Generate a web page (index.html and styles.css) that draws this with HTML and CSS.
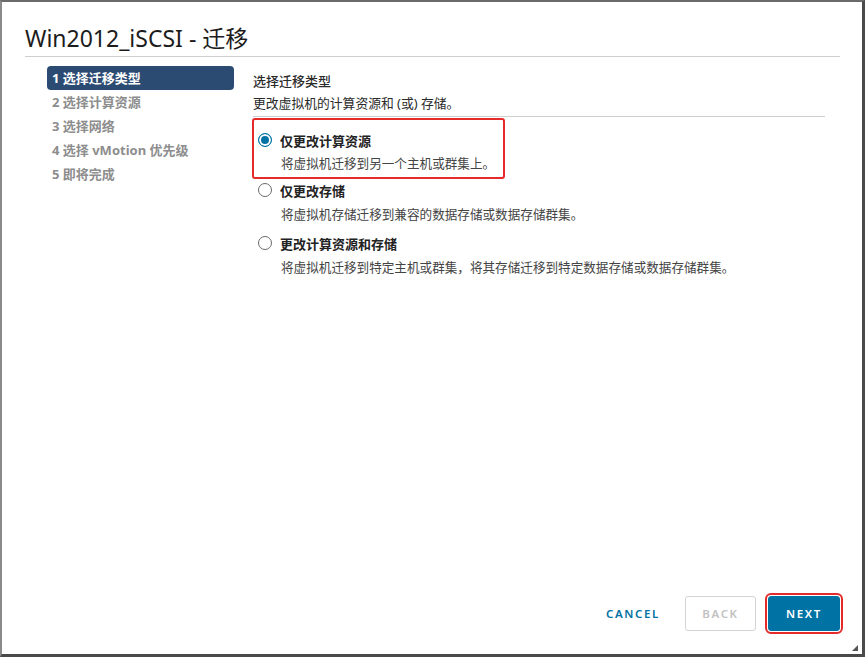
FILE: index.html
```html
<!DOCTYPE html>
<html lang="zh-CN">
<head>
<meta charset="utf-8">
<title>Win2012_iSCSI - 迁移</title>
<link rel="stylesheet" href="styles.css">
</head>
<body>
<div class="frame">
  <h1 class="title">Win2012_iSCSI - 迁移</h1>
  <div class="main">
    <nav class="steps">
      <div class="step active">1 选择迁移类型</div>
      <div class="step">2 选择计算资源</div>
      <div class="step">3 选择网络</div>
      <div class="step">4 选择 vMotion 优先级</div>
      <div class="step">5 即将完成</div>
    </nav>
    <section class="content">
      <div class="head">
        <div class="heading">选择迁移类型</div>
        <div class="sub">更改虚拟机的计算资源和 (或) 存储。</div>
      </div>
      <div class="option highlight">
        <div class="opt-label"><span class="radio checked"></span>仅更改计算资源</div>
        <div class="opt-desc">将虚拟机迁移到另一个主机或群集上。</div>
      </div>
      <div class="option second">
        <div class="opt-label"><span class="radio"></span>仅更改存储</div>
        <div class="opt-desc">将虚拟机存储迁移到兼容的数据存储或数据存储群集。</div>
      </div>
      <div class="option third">
        <div class="opt-label"><span class="radio"></span>更改计算资源和存储</div>
        <div class="opt-desc">将虚拟机迁移到特定主机或群集，将其存储迁移到特定数据存储或数据存储群集。</div>
      </div>
    </section>
  </div>
  <footer class="footer">
    <button class="btn flat">CANCEL</button>
    <button class="btn outline">BACK</button>
    <button class="btn primary">NEXT</button>
  </footer>
  <span class="grip"></span>
</div>
</body>
</html>
```

FILE: styles.css
```css
* { box-sizing: border-box; }
html, body {
  margin: 0;
  padding: 0;
  background: #fff;
}
body {
  font-family: "Noto Sans", "Noto Sans CJK SC", sans-serif;
  color: #333;
}
.frame {
  position: relative;
  width: 865px;
  height: 657px;
  border-top: 2px solid #6a6a6a;
  border-left: 2px solid #8a8a8a;
  border-right: 3px solid #4a4a4a;
  border-bottom: 3px solid #4a4a4a;
  background: #fff;
  display: flex;
  flex-direction: column;
}
.title {
  margin: 0 22px 0 23px;
  padding: 22px 0 3px;
  font-size: 23px;
  line-height: 29px;
  font-weight: 400;
  color: #1c1c1c;
  border-bottom: 1px solid #cfcfcf;
}
.main {
  flex: 1;
  display: flex;
  padding: 9px 0 0 45px;
  gap: 19px;
}
.steps {
  width: 187px;
  flex: none;
}
.step {
  height: 24px;
  line-height: 24px;
  padding-left: 5px;
  font-size: 13px;
  font-weight: 700;
  color: #8d8d8d;
}
.step.active {
  background: #2c4b72;
  color: #fff;
  border-radius: 4px;
}
.content {
  width: 572px;
  padding-top: 3px;
}
.head {
  border-bottom: 1px solid #cfcfcf;
  padding-bottom: 3px;
}
.heading {
  font-size: 13px;
  line-height: 24px;
  font-weight: 500;
  color: #2a2a2a;
}
.sub {
  font-size: 12.8px;
  line-height: 20px;
  color: #2a2a2a;
}
.option {
  padding-left: 6px;
}
.option.highlight {
  width: 253px;
  margin: 1px 0 0 -1px;
  padding: 8px 0 1px 5px;
  border: 2px solid #e52a2a;
  border-radius: 3px;
}
.option.second { margin-top: -1px; }
.option.third { margin-top: 4px; }
.opt-label {
  display: flex;
  align-items: center;
  height: 24px;
  font-size: 13px;
  font-weight: 700;
  color: #222;
}
.opt-desc {
  height: 24px;
  line-height: 24px;
  margin-top: 1px;
  padding-left: 22px;
  font-size: 12.6px;
  color: #444;
}
.highlight .opt-desc { margin-top: 0; }
.radio {
  width: 14px;
  height: 14px;
  border-radius: 50%;
  border: 1px solid #6b6b6b;
  margin-right: 8px;
  margin-left: -1px;
  flex: none;
  background: #fff;
}
.radio.checked {
  border-color: #0072a3;
  background: #0072a3;
  box-shadow: inset 0 0 0 2px #fff;
}
.footer {
  display: flex;
  justify-content: flex-end;
  align-items: center;
  gap: 12px;
  padding: 0 22px 23px 0;
}
.btn {
  height: 35px;
  min-width: 72px;
  padding: 0 12px;
  font-family: "Noto Sans", sans-serif;
  font-size: 11.5px;
  font-weight: 600;
  letter-spacing: 1.6px;
  border-radius: 3px;
  background: #fff;
  cursor: pointer;
}
.btn.flat {
  border: 1px solid transparent;
  color: #0072a3;
  min-width: 80px;
}
.btn.outline {
  border: 1px solid #d4d4d4;
  color: #c2c2c2;
  width: 71px;
  min-width: 71px;
}
.btn.primary {
  border: 1px solid #0072a3;
  background: #0072a3;
  color: #fff;
  outline: 2px solid #e52a2a;
  outline-offset: 1px;
}
.grip {
  position: absolute;
  right: 4px;
  bottom: 3px;
  width: 0;
  height: 0;
  border-left: 6px solid transparent;
  border-bottom: 6px solid #555;
}
```
